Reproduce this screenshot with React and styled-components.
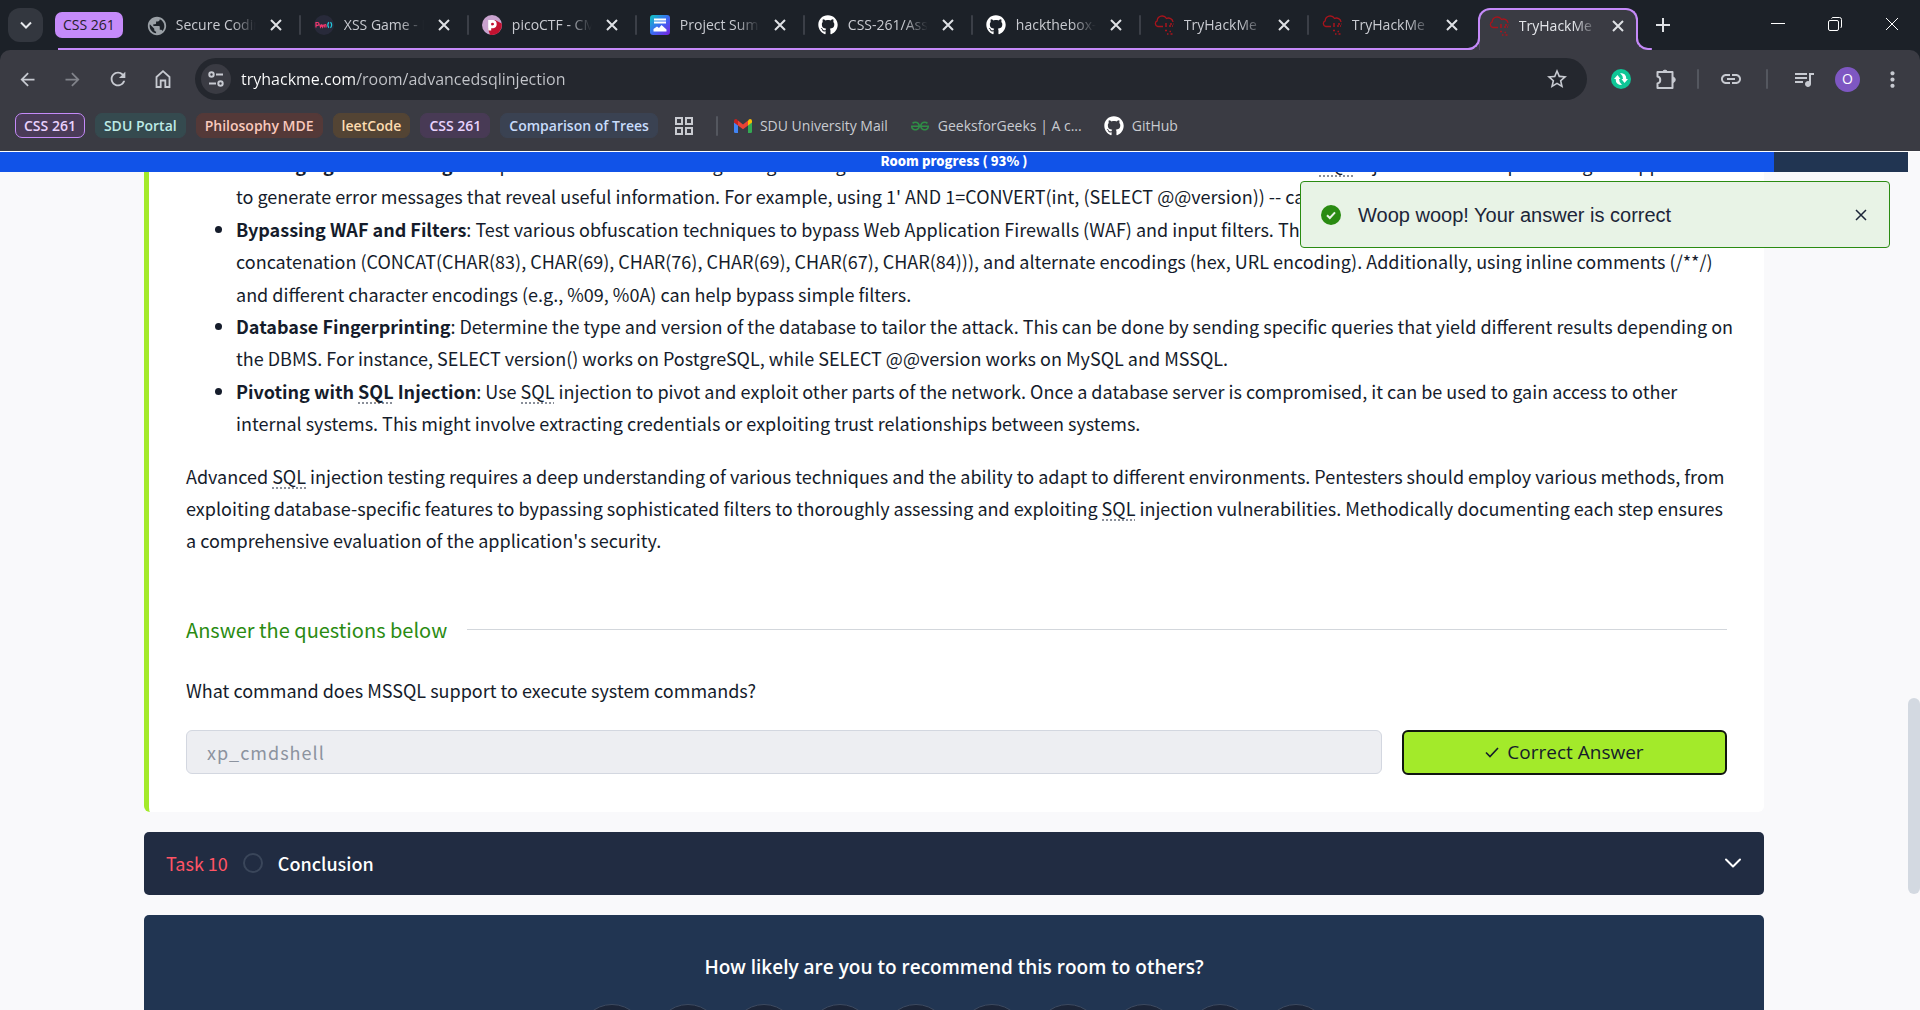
import React from 'react';
import styled, { createGlobalStyle, css } from 'styled-components';
import {
  MdArrowBack,
  MdArrowForward,
  MdRefresh,
  MdStarBorder,
  MdMoreVert,
  MdLink,
  MdQueueMusic,
  MdPublic,
} from 'react-icons/md';
import { FaGithub } from 'react-icons/fa';
import { SiGeeksforgeeks } from 'react-icons/si';

const ui = "'Open Sans', 'Noto Sans', sans-serif";
const body = "'Noto Sans CJK SC', 'Noto Sans', sans-serif";
const purple = '#c58af9';

const GlobalStyle = createGlobalStyle`
  *, *::before, *::after { box-sizing: border-box; }
  body { margin: 0; background: #f9f9fb; }
  button { border: 0; padding: 0; background: none; font: inherit; color: inherit; cursor: pointer; }
  a { color: inherit; text-decoration: none; }
`;

const Window = styled.div`
  display: flex;
  flex-direction: column;
  height: 100vh;
  overflow: hidden;
  background: #1c2128;
  font-family: ${ui};
`;

/* ---------- tab strip ---------- */

const TabStrip = styled.header`
  display: flex;
  height: 50px;
  padding-left: 8px;
  color: #c9cbd1;
  font-size: 14px;
  line-height: 20px;
`;

const TabSearch = styled.button`
  display: grid;
  place-items: center;
  width: 35px;
  height: 34px;
  margin: 8px 12px 0 0;
  border-radius: 12px;
  background: #33373f;
  color: #e6e8ec;
`;

const TabGroup = styled.nav`
  position: relative;
  display: flex;
  min-width: 0;
  &::after {
    content: '';
    position: absolute;
    left: 3px;
    right: 0;
    bottom: 0;
    height: 2px;
    background: ${purple};
  }
`;

const GroupChip = styled.button`
  flex: none;
  height: 26px;
  margin: 12px 10px 0 0;
  padding: 0 8px;
  border-radius: 7px;
  background: ${purple};
  color: #24202b;
`;

const activeTab = css`
  z-index: 1;
  flex-basis: 160px;
  height: 42px;
  margin: 8px 0 0 1px;
  padding: 0 10px 8px 9px;
  border: 2px solid ${purple};
  border-bottom: 0;
  border-radius: 12px 12px 0 0;
  background: #3a3b43;
  color: #e4e6ea;
  &::before,
  &::after {
    content: '';
    position: absolute;
    bottom: 0;
    width: 16px;
    height: 14px;
    border-bottom: 2px solid ${purple};
    clip-path: inset(0);
  }
  &::before {
    right: 100%;
    border-right: 2px solid ${purple};
    border-bottom-right-radius: 12px;
    box-shadow: 6px 6px 0 5px #3a3b43;
  }
  &::after {
    left: 100%;
    border-left: 2px solid ${purple};
    border-bottom-left-radius: 12px;
    box-shadow: -6px 6px 0 5px #3a3b43;
  }
`;

const Tab = styled.div`
  position: relative;
  display: flex;
  align-items: center;
  flex: 0 1 168px;
  min-width: 0;
  height: 50px;
  padding: 0 15px 0 13px;
  ${(p) =>
    p.$active
      ? activeTab
      : css`
          border-right: 2px solid transparent;
        `}
`;

const TabDivider = styled.span`
  align-self: center;
  flex: none;
  width: 2px;
  height: 20px;
  margin-left: -2px;
  border-radius: 1px;
  background: #3b3f47;
`;

const Favicon = styled.span`
  display: grid;
  place-items: center;
  flex: none;
  width: 20px;
  height: 20px;
  color: ${(p) => p.$color || '#ffffff'};
`;

const TabTitle = styled.a`
  flex: 1;
  min-width: 0;
  margin: 0 12px 0 10px;
  overflow: hidden;
  white-space: nowrap;
  mask-image: linear-gradient(90deg, #000 70%, transparent);
`;

const CloseTab = styled.button`
  display: grid;
  place-items: center;
  flex: none;
  width: 16px;
  height: 16px;
  color: #dfe1e5;
`;

const NewTab = styled.button`
  display: grid;
  place-items: center;
  width: 30px;
  height: 30px;
  margin: 10px 0 0 10px;
  color: #dfe1e5;
`;

const WindowControls = styled.div`
  display: flex;
  margin-left: auto;
  height: 48px;
  color: #ffffff;
  button {
    display: grid;
    place-items: center;
    width: 57px;
  }
`;

/* ---------- toolbar ---------- */

const Toolbar = styled.div`
  display: flex;
  align-items: center;
  height: 58px;
  flex: none;
  padding: 0 5px 0 12px;
  border-radius: 10px 10px 0 0;
  background: #3a3b43;
  color: #c7cad1;
`;

const ToolButton = styled.button`
  display: grid;
  place-items: center;
  flex: none;
  width: ${(p) => p.$w || 45}px;
  height: 34px;
  opacity: ${(p) => (p.$dim ? 0.5 : 1)};
`;

const NavButtons = styled.div`
  display: flex;
  margin-left: -7px;
`;

const Omnibox = styled.div`
  display: flex;
  align-items: center;
  flex: 1;
  height: 42px;
  margin-left: 10px;
  padding: 0 17px 0 6px;
  border-radius: 21px;
  background: #24272e;
`;

const SiteInfo = styled.button`
  display: grid;
  place-items: center;
  width: 30px;
  height: 30px;
  margin-right: 10px;
  border-radius: 50%;
  background: #3a3b43;
`;

const Address = styled.input`
  flex: 1;
  min-width: 0;
  height: 30px;
  padding: 0;
  border: 0;
  outline: 0;
  background: linear-gradient(90deg, #ffffff 116px, #c4c6cb 116px);
  background-clip: text;
  color: transparent;
  font: 16px/30px ${ui};
`;

const Divider = styled.span`
  flex: none;
  width: 2px;
  height: 20px;
  margin: 0 ${(p) => p.$gap}px;
  border-radius: 1px;
  background: #54575f;
`;

const Avatar = styled.button`
  width: 25px;
  height: 25px;
  margin: 0 10px 0 9px;
  border-radius: 50%;
  background: #7e57c2;
  color: #ffffff;
  font-size: 14px;
  line-height: 24px;
`;

const Extensions = styled.div`
  display: flex;
  align-items: center;
  margin-left: 11px;
`;

/* ---------- bookmarks ---------- */

const BookmarkBar = styled.nav`
  display: flex;
  align-items: center;
  flex: none;
  gap: 10px;
  height: 43px;
  padding: 0 15px 8px;
  background: #3a3b43;
  color: #c9cbd1;
  font-size: 14px;
  line-height: 23px;
`;

const Pill = styled.button`
  padding: 0 8px;
  border: 1px solid ${(p) => p.$line || p.$bg};
  border-radius: 7px;
  background: ${(p) => p.$bg};
  color: ${(p) => p.$fg};
  font-weight: 600;
`;

const Bookmark = styled.a`
  display: flex;
  align-items: center;
  gap: 8px;
  margin-right: 12px;
`;

/* ---------- page ---------- */

const Viewport = styled.div`
  display: flex;
  flex: 1;
  min-height: 0;
  border-top: 1px solid #ffffff;
  background: #f9f9fb;
`;

const Page = styled.div`
  display: flex;
  flex-direction: column;
  flex: 1;
  min-width: 0;
  color: #151c2b;
  font-family: ${body};
`;

const Scrollbar = styled.div`
  flex: none;
  width: 12px;
  padding-top: 546px;
`;

const Thumb = styled.div`
  height: 196px;
  border-radius: 6px;
  background: #d3d9e1;
`;

const Progress = styled.div`
  display: grid;
  flex: none;
  height: 20px;
  background: #213552;
`;

const ProgressFill = styled.div`
  grid-area: 1 / 1;
  background: #1153e8;
`;

const ProgressLabel = styled.span`
  grid-area: 1 / 1;
  color: #ffffff;
  font-size: 13px;
  font-weight: 900;
  line-height: 18px;
  text-align: center;
`;

const Column = styled.main`
  display: flex;
  flex-direction: column;
  gap: 20px;
  min-height: 0;
  overflow: hidden;
  width: 100%;
  max-width: 1620px;
  margin: 0 auto;
`;

const TaskCard = styled.section`
  flex: none;
  overflow: hidden;
  padding: 0 37px;
  border-left: 5px solid #a3ea2a;
  border-radius: 0 0 6px 6px;
  background: #ffffff;
  font-size: 18px;
  line-height: 1.8;
`;

const Tips = styled.ul`
  margin: -24px -12px 0 0;
  padding-left: 50px;
`;

const Term = styled.abbr`
  text-decoration: none;
  background: repeating-linear-gradient(90deg, #8a8f99 0 2px, transparent 2px 4px) 0 100% / 100% 2px no-repeat;
`;

const Paragraph = styled.p`
  margin: 20px 0 0;
`;

const SectionHeading = styled.h2`
  display: flex;
  align-items: center;
  gap: 20px;
  margin: 57px 0 0;
  color: #2a8b12;
  font-size: 20px;
  font-weight: 400;
  line-height: 32px;
  &::after {
    content: '';
    flex: 1;
    height: 1px;
    background: #d3d7dc;
  }
`;

const Question = styled.label`
  display: block;
  margin: 28px 0 24px;
  line-height: 32px;
`;

const AnswerRow = styled.form`
  display: flex;
  gap: 20px;
  margin-bottom: 37px;
`;

const AnswerInput = styled.input`
  flex: 1;
  min-width: 0;
  height: 44px;
  padding: 0 20px;
  border: 1px solid #d3d7e0;
  border-radius: 6px;
  background: #edeef2;
  color: #8c939f;
  font: 18px ${body};
  letter-spacing: 1px;
`;

const AnswerButton = styled.button`
  display: flex;
  align-items: center;
  justify-content: center;
  gap: 8px;
  width: 325px;
  height: 45px;
  border: 2px solid #10150f;
  border-radius: 6px;
  background: #a3ea2a;
  color: #151c2b;
  font: 19px ${ui};
`;

const TaskBar = styled.button`
  display: flex;
  align-items: center;
  flex: none;
  gap: 15px;
  height: 63px;
  padding: 0 22px;
  border-radius: 5px;
  background: #212c42;
  color: #ffffff;
  font-size: 18px;
  font-weight: 500;
  svg:last-child {
    margin-left: auto;
  }
`;

const TaskNumber = styled.span`
  color: #ff5465;
  font-weight: 400;
`;

const StatusRing = styled.span`
  width: 20px;
  height: 20px;
  border: 2px solid #3a465a;
  border-radius: 50%;
`;

const Recommend = styled.section`
  display: flex;
  flex-direction: column;
  align-items: center;
  flex: none;
  padding: 36px 0 40px;
  border-radius: 5px;
  background: #213552;
  color: #ffffff;
`;

const RecommendTitle = styled.h2`
  margin: 0 0 21px;
  font: 600 19px/32px ${ui};
`;

const Scores = styled.div`
  display: flex;
  gap: 10px;
`;

const Score = styled.button`
  width: 66px;
  height: 66px;
  border: 1px solid #3d4a60;
  border-radius: 50%;
  background: #1c2538;
  font-size: 18px;
`;

const Toast = styled.div`
  position: absolute;
  top: 181px;
  right: 30px;
  display: flex;
  align-items: center;
  width: 590px;
  height: 67px;
  padding: 0 20px;
  border: 1px solid #2a8b12;
  border-radius: 4px;
  background: #e8f3e6;
  color: #1c2538;
  font: 20px/30px 'Liberation Sans', Arial, sans-serif;
`;

const ToastText = styled.span`
  flex: 1;
  margin-left: 17px;
`;

const ToastClose = styled.button`
  display: grid;
  place-items: center;
  width: 16px;
  height: 16px;
`;

/* ---------- drawings ---------- */

const Cross = ({ size = 16, inset = 3, width = 2 }) => (
  <svg width={size} height={size} viewBox={`0 0 ${size} ${size}`} fill="none" stroke="currentColor" strokeWidth={width} aria-hidden="true">
    <path d={`M${inset} ${inset}L${size - inset} ${size - inset}M${size - inset} ${inset}L${inset} ${size - inset}`} />
  </svg>
);

const ChevronDown = ({ width = 2 }) => (
  <svg width="18" height="18" viewBox="0 0 18 18" fill="none" stroke="currentColor" strokeWidth={width} strokeLinecap="round" strokeLinejoin="round" aria-hidden="true">
    <path d="M2 5.5L9 12.500L16 5.500" />
  </svg>
);

const HomeIcon = () => (
  <svg width="20" height="20" viewBox="0 0 20 20" fill="none" stroke="currentColor" strokeWidth="1.800" aria-hidden="true">
    <path d="M3.500 8L10 2.200L16.500 8V18H12.300V11.500H7.700V18H3.500Z" />
  </svg>
);

const TuneIcon = () => (
  <svg width="18" height="18" viewBox="0 0 18 18" fill="none" stroke="currentColor" strokeWidth="2" aria-hidden="true">
    <circle cx="4.500" cy="4.500" r="2.200" />
    <path d="M9 4.500H16M2 13.500H9" />
    <circle cx="13.500" cy="13.500" r="2.200" />
  </svg>
);

const PuzzleIcon = () => (
  <svg width="22" height="22" viewBox="0 0 22 22" aria-hidden="true">
    <path
      d="M2.500 4H17.500V20H2.500V15.500A3.600 3.600 0 0 0 2.500 8.500Z"
      fill="none"
      stroke="currentColor"
      strokeWidth="2"
      strokeLinejoin="round"
    />
    <path d="M7.500 4A2.600 2.600 0 0 1 12.500 4ZM18 9A2.800 2.800 0 0 1 18 14.500Z" fill="currentColor" stroke="currentColor" />
  </svg>
);

const PwnIcon = () => (
  <svg width="20" height="20" viewBox="0 0 20 20" aria-hidden="true">
    <circle cx="10" cy="10" r="10" fill="#282a3a" />
    <g fill="none" strokeWidth="1.200">
      <path d="M2 12.500V7.500H3.500Q5 7.500 5 9Q5 10.300 3.500 10.300H2.200M5.800 9.500L6.500 12L7.500 10L8.500 12L9.200 9.500M10.300 12.500V10Q12 8.800 12 10.500V12.500" stroke="#f2386f" />
      <path d="M14.800 7.200Q12.800 10 14.800 12.800M16.500 7.200Q18.800 10 16.500 12.800" stroke="#22c8dc" />
    </g>
  </svg>
);

const PicoIcon = () => (
  <svg width="20" height="20" viewBox="0 0 20 20" aria-hidden="true">
    <circle cx="10" cy="10" r="10" fill="#c9a3cf" />
    <path d="M13 5L19.700 8.500A10 10 0 0 1 8 19.800L6 14Z" fill="#c41230" />
    <path d="M7.700 15.500V6.500H11A2.700 2.700 0 0 1 11 11.800H8" fill="none" stroke="#fff" strokeWidth="3" />
    <circle cx="10.500" cy="9" r="1.300" fill="#c41230" />
  </svg>
);

const ProjectIcon = () => (
  <svg width="20" height="20" viewBox="0 0 20 20" aria-hidden="true">
    <defs>
      <linearGradient id="projectFill" x1="0" y1="0" x2="1" y2="1">
        <stop offset="0" stopColor="#0fc8c0" />
        <stop offset="0.500" stopColor="#3a6cf2" />
        <stop offset="1" stopColor="#7a1fe0" />
      </linearGradient>
    </defs>
    <rect width="20" height="20" rx="3" fill="url(#projectFill)" />
    <path d="M4 4.500H16M4 7.500H16" stroke="#fff" strokeWidth="2" />
    <path d="M3.500 16.500V14L7 11.500L9 13L11.500 10L16.500 14.500V16.500Z" fill="#fff" />
  </svg>
);

const ThmIcon = () => (
  <svg width="20" height="20" viewBox="0 0 20 20" fill="none" stroke="#a8141c" strokeWidth="1.300" aria-hidden="true">
    <path d="M9 11.500H3.800A3 3 0 0 1 3.200 5.800A5 5 0 0 1 12.500 3.500A4.500 4.500 0 0 1 19 7" />
    <path d="M11 9H14M16 9H19.500M11 11H13M15 11H19M11 15.500H14M15.500 16.500H17M13 19H14.500M16.500 19H18.500" strokeDasharray="2 1" />
  </svg>
);

const GmailIcon = () => (
  <svg width="18" height="14" viewBox="0 0 18 14" aria-hidden="true">
    <path d="M0 3V12.800Q0 14 1.200 14H4V6Z" fill="#4285f4" />
    <path d="M18 3V12.800Q18 14 16.800 14H14V6Z" fill="#34a853" />
    <path d="M4 1.500L9 5.500L14 1.500V6.500L9 10.300L4 6.500Z" fill="#ea4335" />
    <path d="M0 2Q0 0 2 0Q3 0 4 1.500V6.500L0 3.500Z" fill="#c5221f" />
    <path d="M18 2Q18 0 16 0Q15 0 14 1.500V6.500L18 3.500Z" fill="#fbbc04" />
  </svg>
);

const GridIcon = () => (
  <svg width="18" height="18" viewBox="0 0 18 18" fill="none" stroke="currentColor" strokeWidth="2" aria-hidden="true">
    <path d="M1 1H7V7H1ZM11 1H17V7H11ZM1 11H7V17H1ZM11 11H17V17H11Z" />
  </svg>
);

const SyncIcon = () => (
  <svg width="20" height="20" viewBox="0 0 20 20" aria-hidden="true">
    <circle cx="10" cy="10" r="10" fill="#0fc696" />
    <path d="M9 4Q15.500 4 15.300 10H17L13.500 14L10.500 10H12Q12 6.500 9 4Z" fill="#fff" />
    <path d="M11 16Q4.500 16 4.700 10H3L6.500 6L9.500 10H8Q8 13.500 11 16Z" fill="#fff" />
  </svg>
);

const SuccessIcon = () => (
  <svg width="20" height="20" viewBox="0 0 20 20" aria-hidden="true">
    <circle cx="10" cy="10" r="10" fill="#2a8b12" />
    <path d="M6 10.300L8.800 13L14 7.300" fill="none" stroke="#e8f3e6" strokeWidth="2" />
  </svg>
);

const CheckIcon = () => (
  <svg width="14" height="14" viewBox="0 0 14 14" fill="none" stroke="currentColor" strokeWidth="1.600" aria-hidden="true">
    <path d="M1 7.500L5 11.500L13 3" />
  </svg>
);

/* ---------- data ---------- */

const tabs = [
  { title: 'Secure Coding', icon: <MdPublic size={22} />, color: '#9aa0a6' },
  { title: 'XSS Game - Learning', icon: <PwnIcon /> },
  { title: 'picoCTF - CMU Cyber', icon: <PicoIcon /> },
  { title: 'Project Summary', icon: <ProjectIcon /> },
  { title: 'CSS-261/Assignments', icon: <FaGithub size={20} /> },
  { title: 'hackthebox-writeups', icon: <FaGithub size={20} /> },
  { title: 'TryHackMe | Learn', icon: <ThmIcon /> },
  { title: 'TryHackMe | Learn', icon: <ThmIcon /> },
  { title: 'TryHackMe | Advanced', icon: <ThmIcon />, active: true },
];

const pills = [
  { name: 'CSS 261', bg: '#4a3b58', fg: '#e9d2fd', line: purple },
  { name: 'SDU Portal', bg: '#354a4f', fg: '#bdebe6' },
  { name: 'Philosophy MDE', bg: '#543938', fg: '#f9c9bd' },
  { name: 'leetCode', bg: '#534434', fg: '#fddcb0' },
  { name: 'CSS 261', bg: '#483a55', fg: '#e9d2fd' },
  { name: 'Comparison of Trees', bg: '#3a4252', fg: '#c8dcfb' },
];

const SQL = () => <Term>SQL</Term>;
const progress = 93;

export default function App() {
  return (
    <Window>
      <GlobalStyle />
      <TabStrip>
        <TabSearch aria-label="Search tabs">
          <svg width="14" height="14" viewBox="0 0 14 14" fill="none" stroke="currentColor" strokeWidth="2" aria-hidden="true">
            <path d="M2 4.500L7 9.500L12 4.500" />
          </svg>
        </TabSearch>
        <TabGroup aria-label="Open tabs">
          <GroupChip>CSS 261</GroupChip>
          {tabs.map((t, i) => (
            <React.Fragment key={i}>
              <Tab $active={t.active}>
                <Favicon $color={t.color}>{t.icon}</Favicon>
                <TabTitle href="#">{t.title}</TabTitle>
                <CloseTab aria-label="Close tab">
                  <Cross />
                </CloseTab>
              </Tab>
              {i < tabs.length - 2 && <TabDivider />}
            </React.Fragment>
          ))}
        </TabGroup>
        <NewTab aria-label="New tab">
          <svg width="14" height="14" viewBox="0 0 14 14" stroke="currentColor" strokeWidth="2" aria-hidden="true">
            <path d="M7 0V14M0 7H14" />
          </svg>
        </NewTab>
        <WindowControls>
          <button aria-label="Minimize">
            <svg width="14" height="14" viewBox="0 0 14 14" stroke="currentColor" aria-hidden="true">
              <path d="M0 6.500H14" />
            </svg>
          </button>
          <button aria-label="Restore">
            <svg width="14" height="14" viewBox="0 0 14 14" fill="none" stroke="currentColor" aria-hidden="true">
              <rect x="0.500" y="3.500" width="10" height="10" rx="1.500" />
              <path d="M3.500 1.500Q4 0.500 5 0.500H11.500Q13.500 0.500 13.500 2.500V9Q13.500 10.500 12.500 11" />
            </svg>
          </button>
          <button aria-label="Close window">
            <Cross size={14} inset={1} width={1} />
          </button>
        </WindowControls>
      </TabStrip>

      <Toolbar>
        <NavButtons>
          <ToolButton aria-label="Back"><MdArrowBack size={21} /></ToolButton>
          <ToolButton aria-label="Forward" $dim><MdArrowForward size={21} /></ToolButton>
          <ToolButton aria-label="Reload"><MdRefresh size={22} /></ToolButton>
          <ToolButton aria-label="Home"><HomeIcon /></ToolButton>
        </NavButtons>
        <Omnibox>
          <SiteInfo aria-label="Site information"><TuneIcon /></SiteInfo>
          <Address aria-label="Address" defaultValue="tryhackme.com/room/advancedsqlinjection" />
          <ToolButton aria-label="Bookmark this page" $w={26}><MdStarBorder size={24} /></ToolButton>
        </Omnibox>
        <Extensions>
          <ToolButton aria-label="Sync extension"><SyncIcon /></ToolButton>
          <ToolButton aria-label="Extensions"><PuzzleIcon /></ToolButton>
          <Divider $gap={9} />
          <ToolButton aria-label="Copy link"><MdLink size={24} /></ToolButton>
          <Divider $gap={13} />
          <ToolButton aria-label="Media control"><MdQueueMusic size={24} /></ToolButton>
          <Avatar aria-label="Profile">O</Avatar>
          <ToolButton aria-label="Menu"><MdMoreVert size={25} /></ToolButton>
        </Extensions>
      </Toolbar>

      <BookmarkBar aria-label="Bookmarks">
        {pills.map((p, i) => (
          <Pill key={i} $bg={p.bg} $fg={p.fg} $line={p.line}>{p.name}</Pill>
        ))}
        <ToolButton aria-label="Tab groups" $w={32}><GridIcon /></ToolButton>
        <Divider $gap={6} />
        <Bookmark href="#"><GmailIcon />SDU University Mail</Bookmark>
        <Bookmark href="#"><Favicon $color="#2f8d46"><SiGeeksforgeeks size={18} /></Favicon>GeeksforGeeks | A c...</Bookmark>
        <Bookmark href="#"><FaGithub size={20} color="#ffffff" />GitHub</Bookmark>
      </BookmarkBar>

      <Viewport>
        <Page>
          <Progress role="progressbar" aria-valuenow={progress} aria-label="Room progress">
            <ProgressFill style={{ width: `${progress}%` }} />
            <ProgressLabel>Room progress ( {progress}% )</ProgressLabel>
          </Progress>
          <Column>
            <TaskCard>
              <Tips>
                <li>
                  <b>Leveraging Error Messages</b>: Exploit verbose error messages to gain insights into the database schema and structure. Error-based <SQL /> injection involves provoking the application to generate error messages that reveal useful information. For example, using 1' AND 1=CONVERT(int, (SELECT @@version)) -- can generate errors that leak version information.
                </li>
                <li>
                  <b>Bypassing WAF and Filters</b>: Test various obfuscation techniques to bypass Web Application Firewalls (WAF) and input filters. This includes using mixed case (e.g., SeLeCt), string concatenation (CONCAT(CHAR(83), CHAR(69), CHAR(76), CHAR(69), CHAR(67), CHAR(84))), and alternate encodings (hex, URL encoding). Additionally, using inline comments (/**/) and different character encodings (e.g., %09, %0A) can help bypass simple filters.
                </li>
                <li>
                  <b>Database Fingerprinting</b>: Determine the type and version of the database to tailor the attack. This can be done by sending specific queries that yield different results depending on the DBMS. For instance, SELECT version() works on PostgreSQL, while SELECT @@version works on MySQL and MSSQL.
                </li>
                <li>
                  <b>Pivoting with <SQL /> Injection</b>: Use <SQL /> injection to pivot and exploit other parts of the network. Once a database server is compromised, it can be used to gain access to other internal systems. This might involve extracting credentials or exploiting trust relationships between systems.
                </li>
              </Tips>
              <Paragraph>
                Advanced <SQL /> injection testing requires a deep understanding of various techniques and the ability to adapt to different environments. Pentesters should employ various methods, from exploiting database-specific features to bypassing sophisticated filters to thoroughly assessing and exploiting <SQL /> injection vulnerabilities. Methodically documenting each step ensures a comprehensive evaluation of the application's security.
              </Paragraph>
              <SectionHeading>Answer the questions below</SectionHeading>
              <Question htmlFor="answer">What command does MSSQL support to execute system commands?</Question>
              <AnswerRow>
                <AnswerInput id="answer" defaultValue="xp_cmdshell" disabled />
                <AnswerButton type="button"><CheckIcon />Correct Answer</AnswerButton>
              </AnswerRow>
            </TaskCard>

            <TaskBar aria-expanded="false">
              <TaskNumber>Task 10</TaskNumber>
              <StatusRing />
              <span>Conclusion</span>
              <ChevronDown />
            </TaskBar>

            <Recommend>
              <RecommendTitle>How likely are you to recommend this room to others?</RecommendTitle>
              <Scores>
                {Array.from({ length: 10 }, (_, i) => (
                  <Score key={i}>{i + 1}</Score>
                ))}
              </Scores>
            </Recommend>
          </Column>
        </Page>
        <Scrollbar><Thumb /></Scrollbar>
      </Viewport>

      <Toast role="status">
        <SuccessIcon />
        <ToastText>Woop woop! Your answer is correct</ToastText>
        <ToastClose aria-label="Dismiss"><Cross size={16} inset={3} width={1.5} /></ToastClose>
      </Toast>
    </Window>
  );
}
